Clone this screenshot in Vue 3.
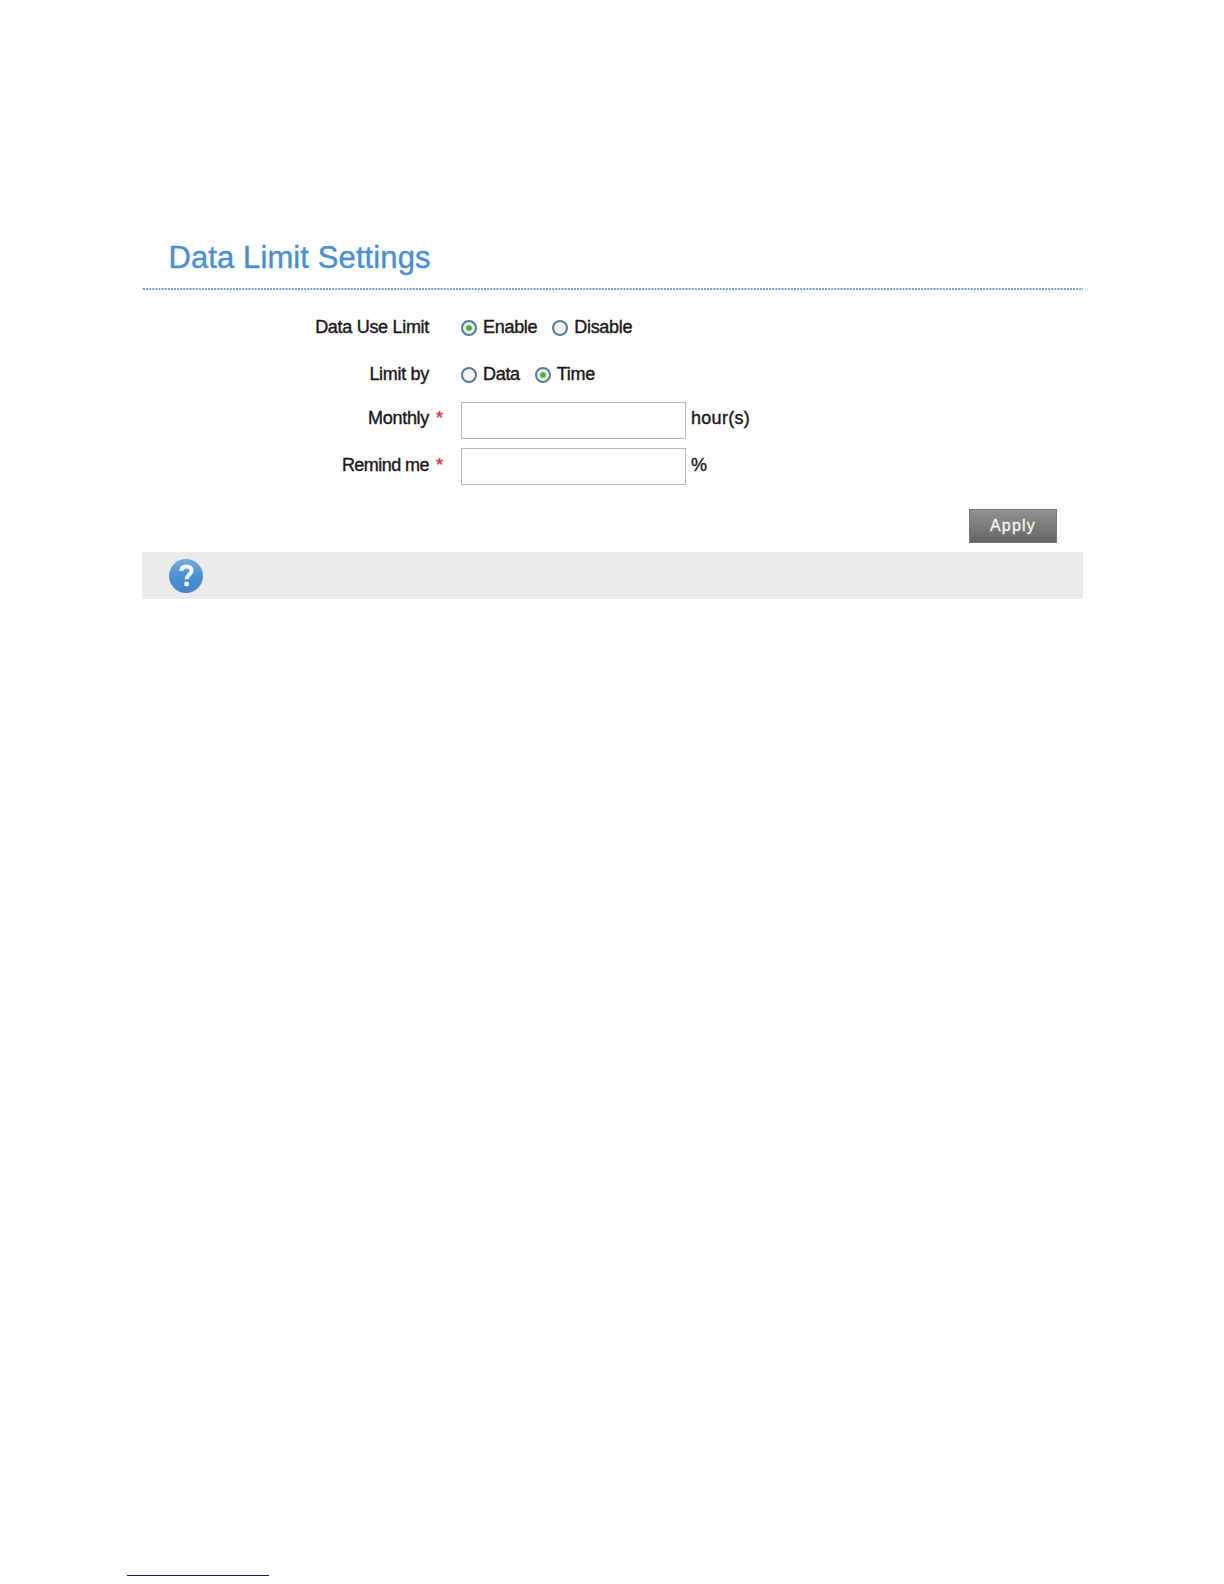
<script setup>
import { ref } from 'vue'

const rows = ref([
  {
    label: 'Data Use Limit',
    name: 'limit-use',
    value: 'Enable',
    options: ['Enable', 'Disable']
  },
  {
    label: 'Limit by',
    name: 'limit-by',
    value: 'Time',
    options: ['Data', 'Time']
  },
  { label: 'Monthly', name: 'monthly', value: '', unit: 'hour(s)', required: true },
  { label: 'Remind me', name: 'remind', value: '', unit: '%', required: true }
])
</script>

<template>
  <div class="page">
    <form class="panel" @submit.prevent>
      <h1 class="title">Data Limit Settings</h1>
      <svg class="divider" width="941" height="2">
        <line x1="1" y1="1" x2="941" y2="1" />
      </svg>

      <div class="fields">
        <div v-for="row in rows" :key="row.name" class="row" :class="row.name">
          <span class="label">{{ row.label }}</span>
          <span class="star">{{ row.required ? '*' : '' }}</span>
          <div v-if="row.options" class="options">
            <label v-for="option in row.options" :key="option" class="option">
              <input v-model="row.value" type="radio" :name="row.name" :value="option" />
              <span>{{ option }}</span>
            </label>
          </div>
          <template v-else>
            <input v-model="row.value" class="text-input" type="text" />
            <span class="unit">{{ row.unit }}</span>
          </template>
        </div>
      </div>

      <div class="actions">
        <button type="submit" class="apply">Apply</button>
      </div>

      <div class="help-bar">
        <svg class="help-icon" width="36" height="36" viewBox="0 0 36 36">
          <defs>
            <linearGradient id="helpFill" x1="0" y1="0" x2="0" y2="1">
              <stop offset="0" stop-color="#74addd" />
              <stop offset="0.5" stop-color="#4c91d4" />
              <stop offset="1" stop-color="#4384ca" />
            </linearGradient>
          </defs>
          <circle cx="18" cy="18" r="17" fill="url(#helpFill)" />
          <path
            d="M13.2 13C13.5 9.8 15.4 8.4 18.3 8.4C21.5 8.4 23.7 10 23.7 12.8C23.7 16.6 18.6 16.8 18.6 21.2"
            fill="none"
            stroke="#fff"
            stroke-width="4"
          />
          <rect x="16.4" y="23.8" width="4.4" height="4.4" rx="1.2" fill="#fff" />
        </svg>
      </div>
    </form>
    <div class="footnote-rule"></div>
  </div>
</template>

<style>
body {
  background: #fff;
}
</style>

<style scoped>
.page {
  box-sizing: border-box;
  width: 1224px;
  height: 1584px;
  padding: 230px 0 8px;
  display: flex;
  flex-direction: column;
  justify-content: space-between;
  overflow: hidden;
  font-family: 'Liberation Sans', Arial, sans-serif;
  font-size: 18px;
  color: #1d1820;
}
.panel {
  width: 941px;
  margin-left: 142px;
}
.title {
  margin: 0;
  height: 58px;
  padding-left: 26.5px;
  line-height: 55px;
  font-size: 31px;
  font-weight: 400;
  letter-spacing: 0.1px;
  color: #4a8fcf;
  -webkit-text-stroke: 0.4px #4a8fcf;
}
.divider {
  display: block;
}
.divider line {
  stroke: #7a9fc2;
  stroke-width: 2;
  stroke-dasharray: 2 1.1;
}

/* --- FORM ROWS --- */
.fields {
  padding-top: 14px;
}
.row {
  display: flex;
  align-items: center;
  height: 46px;
  letter-spacing: -0.3px;
  -webkit-text-stroke: 0.4px currentColor;
}
.limit-use {
  height: 47px;
}
.label {
  width: 287px;
  text-align: right;
}
.monthly .label,
.monthly .star,
.monthly .unit {
  padding-bottom: 3px;
}
.remind .label,
.remind .star,
.remind .unit {
  padding-bottom: 2px;
}
.remind .label {
  letter-spacing: -0.55px;
}
.star {
  width: 25px;
  padding-left: 7px;
  color: #d8303f;
}
.options {
  display: flex;
  gap: 15px;
}
.option {
  display: flex;
  align-items: center;
  gap: 6px;
}
.option input {
  appearance: none;
  box-sizing: border-box;
  width: 16px;
  height: 16px;
  margin: 1px 0 0;
  border: 2px solid #56799f;
  border-radius: 50%;
  background: #f3f4f0;
}
.option input:checked {
  background: radial-gradient(circle, #3fb13a 0 2.2px, #e9f5e4 3.6px);
}
.text-input {
  box-sizing: border-box;
  width: 225px;
  height: 37px;
  margin: 0;
  padding: 0 8px;
  border: 1px solid #b8b8b8;
  outline: none;
  background: #fff;
  font: inherit;
}
.unit {
  margin-left: 5px;
  letter-spacing: 0.3px;
}

/* --- ACTIONS AND HELP --- */
.actions {
  display: flex;
  justify-content: flex-end;
  padding: 20px 26px 9px 0;
}
.apply {
  width: 88px;
  height: 34px;
  padding: 0;
  border: 1px solid #777;
  background: linear-gradient(#929292, #656565);
  color: #f4f4f4;
  font: 16px 'Liberation Sans', Arial, sans-serif;
  letter-spacing: 1.2px;
  -webkit-text-stroke: 0.3px #f4f4f4;
}
.help-bar {
  display: flex;
  align-items: center;
  height: 47px;
  padding-left: 26px;
  background: #ebebeb;
}
.footnote-rule {
  width: 142px;
  height: 1px;
  margin-left: 127px;
  background: #15157d;
}
</style>
